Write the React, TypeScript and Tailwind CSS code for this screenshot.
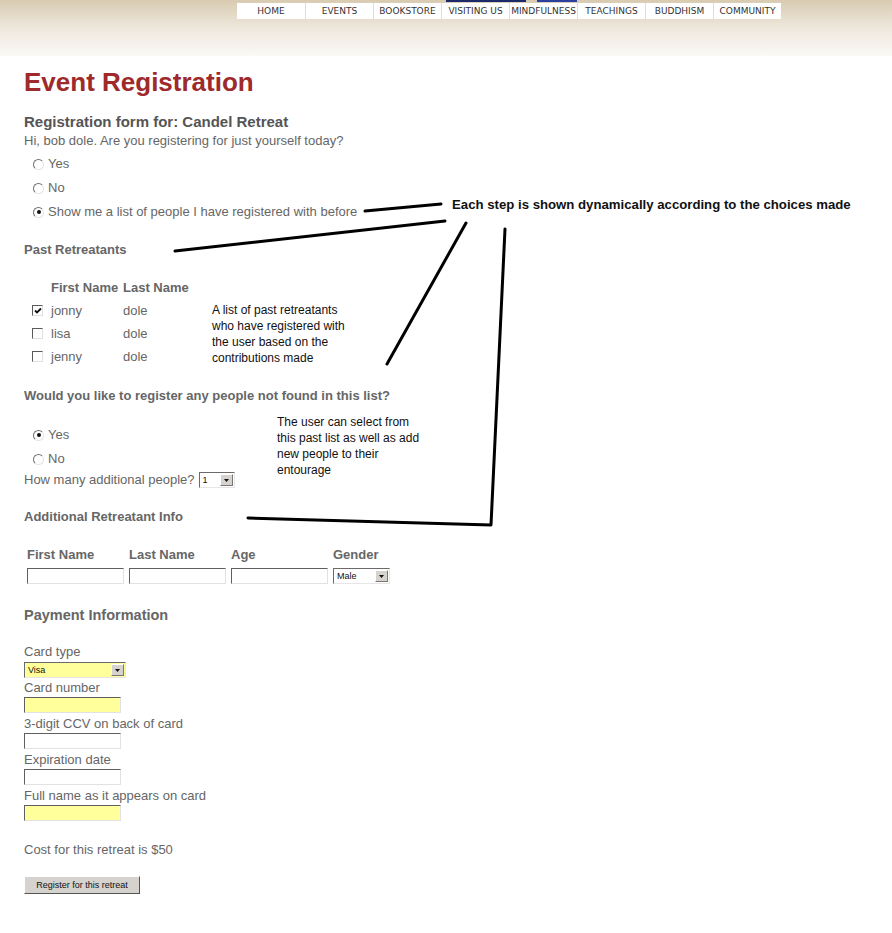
import React from 'react';

const NAV = ['HOME', 'EVENTS', 'BOOKSTORE', 'VISITING US', 'MINDFULNESS', 'TEACHINGS', 'BUDDHISM', 'COMMUNITY'];

const PAST = [
  { first: 'jonny', last: 'dole', checked: true },
  { first: 'lisa', last: 'dole', checked: false },
  { first: 'jenny', last: 'dole', checked: false },
];

function Radio({ checked }: { checked?: boolean }) {
  return (
    <span className="relative inline-block w-[11px] h-[11px] rounded-full border border-t-[#6f6f6f] border-l-[#6f6f6f] border-b-[#e4e4e4] border-r-[#e4e4e4] bg-white shrink-0">
      {checked && <span className="absolute left-[2.5px] top-[2.5px] w-[4px] h-[4px] rounded-full bg-[#111]" />}
    </span>
  );
}

function Check({ checked }: { checked?: boolean }) {
  return (
    <span className="relative inline-block w-[11px] h-[11px] border border-t-[#5a5a5a] border-l-[#5a5a5a] border-b-[#e0e0e0] border-r-[#e0e0e0] bg-white shrink-0">
      {checked && (
        <svg className="absolute left-[1px] top-[1px]" width="8" height="8" viewBox="0 0 8 8">
          <path d="M1 3.5 L3 5.5 L7 1.5" stroke="#111" strokeWidth="1.8" fill="none" />
        </svg>
      )}
    </span>
  );
}

function Select({ value, width, yellow }: { value: string; width: string; yellow?: boolean }) {
  return (
    <div
      className={`${width} h-[16px] flex items-stretch border border-t-[#6a6a6a] border-l-[#6a6a6a] border-b-[#e6e6e6] border-r-[#e6e6e6] ${
        yellow ? 'bg-[#ffff9c]' : 'bg-white'
      }`}
    >
      <span className="flex-1 pl-[3px] text-[9px] leading-[14px] text-[#111]">{value}</span>
      <span className="w-[13px] m-[1px] bg-[#d6d3ce] border border-t-white border-l-white border-b-[#777] border-r-[#777] flex items-center justify-center">
        <svg width="5" height="3" viewBox="0 0 5 3">
          <path d="M0 0 H5 L2.5 3 Z" fill="#111" />
        </svg>
      </span>
    </div>
  );
}

function TextBox({ yellow, width = 'w-[97px]' }: { yellow?: boolean; width?: string }) {
  return (
    <div
      className={`${width} h-[16px] border border-t-[#5f5f5f] border-l-[#5f5f5f] border-b-[#e2e2e2] border-r-[#e2e2e2] ${
        yellow ? 'bg-[#ffff9c]' : 'bg-white'
      }`}
    />
  );
}

function RadioRow({ label, checked }: { label: string; checked?: boolean }) {
  return (
    <div className="h-[24px] flex items-center gap-[4px] pl-[9px]">
      <Radio checked={checked} />
      <span className="text-[13px] leading-[16px]">{label}</span>
    </div>
  );
}

export default function App() {
  return (
    <div className="relative w-[892px] min-h-[933px] bg-white text-[#666] font-['Liberation_Sans',Arial,sans-serif]">
      {/* Site header */}
      <header className="h-[56px] bg-gradient-to-b from-[#d8cbb1] via-[#eee7dc] to-[#fbfaf7]">
        <div className="h-[2px] flex">
          <span className="ml-[446px] w-[80px] bg-[#1c2a6b]" />
          <span className="ml-[11px] w-[40px] bg-[#2b3fa0]" />
        </div>
        <nav className="ml-[237px] mt-[1px] w-[544px] h-[16px] flex bg-white">
          {NAV.map((item, i) => (
            <span
              key={item}
              className={`w-[68px] text-center text-[9px] leading-[16px] text-[#333] font-['DejaVu_Sans',sans-serif] ${
                i > 0 ? 'border-l border-[#e2ddd3]' : ''
              }`}
            >
              {item}
            </span>
          ))}
        </nav>
      </header>

      <main className="px-6">
        <h1 className="mt-[10px] text-[26px] leading-[32px] font-bold text-[#9e2a2b]">Event Registration</h1>

        <h2 className="mt-[16px] text-[15px] leading-[16px] font-bold text-[#555]">Registration form for: Candel Retreat</h2>
        <p className="mt-[3px] text-[13px] leading-[16px]">Hi, bob dole. Are you registering for just yourself today?</p>

        <div className="mt-[3px]">
          <RadioRow label="Yes" />
          <RadioRow label="No" />
          <RadioRow label="Show me a list of people I have registered with before" checked />
        </div>

        <h3 className="mt-[18px] text-[13px] leading-[16px] font-bold text-[#666]">Past Retreatants</h3>

        <div className="mt-[22px] pl-[27px] flex text-[13px] leading-[16px] font-bold text-[#666]">
          <span className="w-[72px]">First Name</span>
          <span>Last Name</span>
        </div>
        <div className="mt-[3px]">
          {PAST.map((p) => (
            <div key={p.first} className="h-[23px] flex items-center pl-[8px] text-[13px]">
              <Check checked={p.checked} />
              <span className="ml-[8px] w-[72px]">{p.first}</span>
              <span>{p.last}</span>
            </div>
          ))}
        </div>

        <h3 className="mt-[20px] text-[13px] leading-[16px] font-bold text-[#666]">
          Would you like to register any people not found in this list?
        </h3>

        <div className="mt-[19px]">
          <RadioRow label="Yes" checked />
          <RadioRow label="No" />
        </div>
        <div className="h-[18px] flex items-center gap-[4px] text-[13px] leading-[16px]">
          <span>How many additional people?</span>
          <Select value="1" width="w-[36px]" />
        </div>

        <h3 className="mt-[20px] text-[13px] leading-[16px] font-bold text-[#666]">Additional Retreatant Info</h3>

        <div className="mt-[22px] ml-[3px] grid grid-cols-[102px_102px_102px_60px] text-[13px] leading-[16px] font-bold text-[#666]">
          <span>First Name</span>
          <span>Last Name</span>
          <span>Age</span>
          <span>Gender</span>
        </div>
        <div className="mt-[5px] ml-[3px] flex gap-[5px]">
          <TextBox />
          <TextBox />
          <TextBox />
          <Select value="Male" width="w-[57px]" />
        </div>

        <h3 className="mt-[23px] text-[14.5px] leading-[16px] font-bold text-[#666]">Payment Information</h3>

        <div className="mt-[21px] text-[13px] leading-[16px]">
          <div>Card type</div>
          <div className="mt-[2px]">
            <Select value="Visa" width="w-[102px]" yellow />
          </div>
          <div className="mt-[2px]">Card number</div>
          <div className="mt-[1px]">
            <TextBox yellow />
          </div>
          <div className="mt-[3px]">3-digit CCV on back of card</div>
          <div className="mt-[1px]">
            <TextBox />
          </div>
          <div className="mt-[3px]">Expiration date</div>
          <div className="mt-[1px]">
            <TextBox />
          </div>
          <div className="mt-[3px]">Full name as it appears on card</div>
          <div className="mt-[1px]">
            <TextBox yellow />
          </div>
        </div>

        <p className="mt-[21px] text-[13px] leading-[16px]">Cost for this retreat is $50</p>

        <button className="mt-[18px] w-[116px] h-[18px] bg-[#d6d3ce] border border-t-white border-l-white border-b-[#555] border-r-[#555] text-[9px] text-[#111] leading-[14px]">
          Register for this retreat
        </button>
      </main>

      {/* Annotations drawn over the form */}
      <p className="absolute left-[452px] top-[197px] text-[13.2px] leading-[16px] font-bold text-[#111]">
        Each step is shown dynamically according to the choices made
      </p>
      <p className="absolute left-[212px] top-[302px] text-[12px] leading-[16px] text-[#111]">
        A list of past retreatants
        <br />
        who have registered with
        <br />
        the user based on the
        <br />
        contributions made
      </p>
      <p className="absolute left-[277px] top-[414px] text-[12px] leading-[16px] text-[#111]">
        The user can select from
        <br />
        this past list as well as add
        <br />
        new people to their
        <br />
        entourage
      </p>
      <svg className="absolute left-0 top-0 pointer-events-none" width="892" height="933">
        <g stroke="#000" strokeWidth="3" fill="none" strokeLinecap="round" strokeLinejoin="round">
          <path d="M365 211 L441 204" />
          <path d="M175 251 L445 221" />
          <path d="M466 223 L387 364" />
          <path d="M505 229 L491 525 L248 518" />
        </g>
      </svg>
    </div>
  );
}
